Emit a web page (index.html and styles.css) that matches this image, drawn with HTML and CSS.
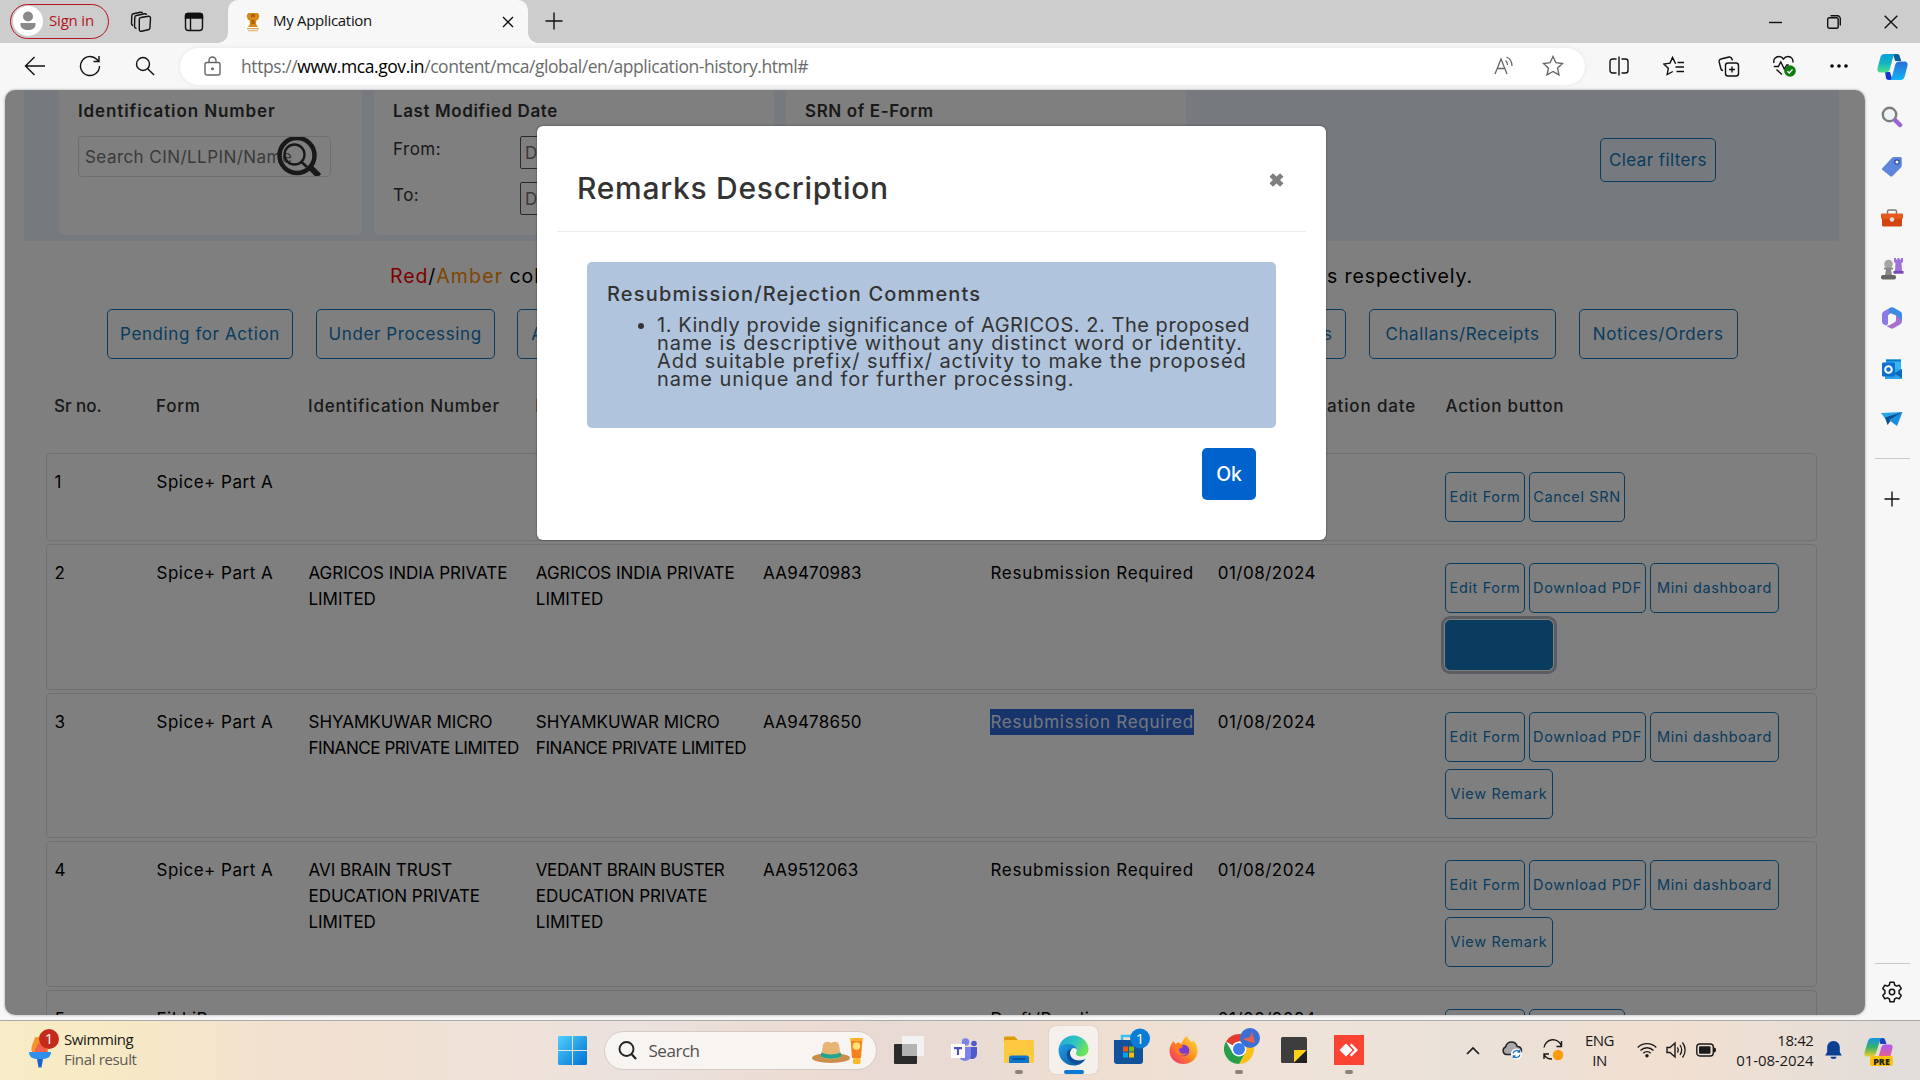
FILE: index.html
```html
<!DOCTYPE html>
<html lang="en">
<head>
<meta charset="utf-8">
<title>My Application</title>
<link rel="stylesheet" href="styles.css">
</head>
<body>
<div class="screen">

<header class="tabbar">
  <div class="signin">
    <svg width="30" height="30" viewBox="0 0 30 30"><circle cx="15" cy="15" r="15" fill="#fff"/><circle cx="15" cy="10.5" r="5" fill="#8a8a8a"/><path d="M7.500 17h15v1.500c0 4-3.500 5.500-7.500 5.500s-7.500-1.500-7.500-5.500z" fill="#8a8a8a"/></svg>
    <span>Sign in</span>
  </div>
  <div class="slot slot-work">
    <svg width="22" height="22" viewBox="0 0 22 22" class="line"><path d="M11 6.500l7.500-1.200a1.800 1.800 0 0 1 2 1.900l-.6 9.800a2 2 0 0 1-1.700 1.800l-6.700 1.500a1.800 1.800 0 0 1-2.200-1.800L9.300 8.300A1.900 1.900 0 0 1 11 6.500zM6.500 17.500l-.8-.3a2 2 0 0 1-1.200-1.900l.3-9a2 2 0 0 1 1.700-1.800l8-1.700c1-.2 1.800.2 2.200 1M3 14.500c-1-.3-1.500-1-1.500-2l.3-8a2 2 0 0 1 1.600-1.800l7-1.500c1-.2 1.800.2 2.200.9"/></svg>
  </div>
  <div class="slot slot-tabs">
    <svg width="20" height="20" viewBox="0 0 20 20" class="line"><rect x="1.500" y="1.500" width="17" height="17" rx="3"/><path d="M1.500 3.500a2 2 0 0 1 2-2h13a2 2 0 0 1 2 2V6h-17z" fill="#111"/><path d="M6.500 6v12"/></svg>
  </div>
  <div class="tab">
    <svg width="16" height="20" viewBox="0 0 16 20"><rect width="16" height="20" fill="#fff"/><path d="M3 1h10l1.500 3-1.500 4h-1.500l-.5 4 2 3H3l2-3-.5-4H3L1.500 4z" fill="#d98a16"/><path d="M6 2h4v3H6zM6.500 8h3v4h-3z" fill="#a8600a"/><path d="M2 16h12v1.200H2zM3 18.200h10v1H3z" fill="#d8a35c"/></svg>
    <span class="tab-title">My Application</span>
    <svg class="tab-close line" width="12" height="12" viewBox="0 0 12 12"><path d="M1 1l10 10M11 1L1 11"/></svg>
  </div>
  <svg class="newtab line" width="18" height="18" viewBox="0 0 18 18"><path d="M9 .5v17M.5 9h17"/></svg>
  <div class="winctl">
    <div><svg width="14" height="14" viewBox="0 0 14 14" class="line"><path d="M0 7.500h13"/></svg></div>
    <div><svg width="14" height="14" viewBox="0 0 14 14" class="line"><rect x=".7" y="2.700" width="10.500" height="10.500" rx="1.800"/><path d="M3.500.8h7a2.800 2.800 0 0 1 2.800 2.800v7"/></svg></div>
    <div><svg width="14" height="14" viewBox="0 0 14 14" class="line"><path d="M.7.700l12.600 12.600M13.300.7L.7 13.300"/></svg></div>
  </div>
</header>

<div class="toolbar">
  <div class="slot"><svg width="22" height="20" viewBox="0 0 22 20" class="line"><path d="M21 10H1.500M10.500 1L1.500 10l9 9"/></svg></div>
  <div class="slot"><svg width="22" height="22" viewBox="0 0 22 22" class="line"><path d="M20.500 11a9.500 9.500 0 1 1-2.800-6.700l2 2M20 1v5.500h-5.500"/></svg></div>
  <div class="slot"><svg width="20" height="20" viewBox="0 0 20 20" class="line"><circle cx="8" cy="8" r="6.500"/><path d="M12.700 12.700l6.300 6.300"/></svg></div>
  <div class="address">
    <svg width="17" height="20" viewBox="0 0 17 20" class="line grey"><rect x="1" y="6.500" width="15" height="12.500" rx="2"/><path d="M5 6.500V4.500a3.500 3.500 0 0 1 7 0v2"/><circle cx="8.500" cy="12.700" r=".8" fill="#555"/></svg>
    <div class="url">https://<b>www.mca.gov.in</b>/content/mca/global/en/application-history.html#</div>
    <svg class="read" width="20" height="20" viewBox="0 0 20 20"><path d="M1 18L7 3l6 15M3.200 12.500h7.600M11.500 4.500c1.500 1 2 2.500 2 4.500M12.500 1c3.500 1.500 5.500 4.500 5.500 9" fill="none" stroke="#666" stroke-width="1.300"/></svg>
    <svg width="22" height="22" viewBox="0 0 22 22" class="line grey"><path d="M11 1.500l2.900 6.200 6.600.8-4.900 4.600 1.300 6.700L11 16.500l-5.900 3.300 1.300-6.700L1.500 8.500l6.600-.8z"/></svg>
  </div>
  <div class="tools">
    <div class="slot"><svg width="20" height="20" viewBox="0 0 20 20" class="line"><path d="M7.500 3H3.500A2.500 2.500 0 0 0 1 5.500v9A2.500 2.500 0 0 0 3.500 17h4M12.500 3h4A2.500 2.500 0 0 1 19 5.500v9a2.500 2.500 0 0 1-2.500 2.500h-4M10 .5v19"/></svg></div>
    <div class="slot"><svg width="21" height="20" viewBox="0 0 21 20" class="line"><path d="M13 7.200l-.7-.1-2.800-5.700L7 7.100l-6.200.9 4.500 4.300L4.200 18.500l5.600-3M14.500 6.500H21M12.500 11h8.500M13.500 15.500H21"/></svg></div>
    <div class="slot"><svg width="22" height="21" viewBox="0 0 22 21" class="line"><rect x="7.500" y="7" width="13" height="13" rx="2.500"/><path d="M14 10.500v6M11 13.500h6M5 14.500c-1.500 0-2-1-2.200-2L1.200 6c-.3-1.500.3-2.700 1.800-3L11 1c1.500-.3 2.500.5 3 2l.4 1.500"/></svg></div>
    <div class="slot"><svg width="24" height="23" viewBox="0 0 24 23" class="line"><path d="M1.800 11.500h4.500l2.500-4.500 3.500 7 2.500-4h2M2 8C1 4.500 3.500 1.500 7 1.500c2 0 3.500 1 4.500 2.500 1-1.500 2.500-2.500 4.500-2.500 3.500 0 5.500 3 4.800 6M4.500 14.500l5.500 5"/><circle cx="18" cy="16" r="5.800" fill="#107c10" stroke="none"/><path d="M15.500 16.200l1.800 1.800 3.200-3.600" stroke="#fff"/></svg></div>
    <div class="slot"><svg width="18" height="6" viewBox="0 0 18 6"><circle cx="2" cy="3" r="1.800"/><circle cx="9" cy="3" r="1.800"/><circle cx="16" cy="3" r="1.800"/></svg></div>
    <div class="slot"><svg width="31" height="28" viewBox="0 0 31 28"><defs><linearGradient id="cp1" x1="0" y1="0" x2="0" y2="1"><stop offset="0" stop-color="#0a9fe0"/><stop offset=".5" stop-color="#16b5c0"/><stop offset="1" stop-color="#4fe08a"/></linearGradient><linearGradient id="cp2" x1="0" y1="0" x2="0" y2="1"><stop offset="0" stop-color="#2a6fd8"/><stop offset="1" stop-color="#12b2f5"/></linearGradient></defs><path d="M16 1h4c2 0 2.500 1 3 3l1.200 4h-6z" fill="#0a5f96"/><path d="M8 19h5l2.500 8H12c-2 0-2.700-1-3-2z" fill="#1438c8"/><path d="M7.500 1H19c-2 0-2.500 1.500-3 3.500l-3 11c-.6 2.500-1.800 4-4.500 4H3.500C.5 19.500 0 17 .7 14.500L3.500 4C4.200 2 5.500 1 7.500 1z" fill="url(#cp1)"/><path d="M23.500 27H12c2 0 2.500-1.500 3-3.500l3-11c.6-2.500 1.800-4 4.500-4h5c3 0 3.500 2.500 2.800 5L27.500 24c-.7 2-2 3-4 3z" fill="url(#cp2)"/></svg></div>
  </div>
</div>

<div class="main">
  <div class="viewport">
    <div class="page">
      <section class="filters">
        <div class="card card-id">
          <h4>Identification Number</h4>
          <div class="searchbox"><span>Search CIN/LLPIN/Name</span>
            <svg width="45" height="39" viewBox="0 0 45 39"><g fill="none" stroke="#333"><circle cx="20" cy="18.500" r="17.500" stroke-width="4.500"/><path d="M33 30l9 9" stroke-width="6"/><circle cx="17.500" cy="17.500" r="10" stroke-width="2.300"/><path d="M24 24.500l6 5.500" stroke-width="2.600"/></g></svg>
          </div>
        </div>
        <div class="card card-date">
          <h4>Last Modified Date</h4>
          <div class="field"><label>From:</label><div class="input">DD/MM/YYYY</div></div>
          <div class="field"><label>To:</label><div class="input">DD/MM/YYYY</div></div>
        </div>
        <div class="card card-srn"><h4>SRN of E-Form</h4></div>
        <div class="clear">Clear filters</div>
      </section>

      <div class="notice"><span><i class="red">Red</i>/<i class="amber">Amber</i> colour coding</span><span>in days respectively.</span></div>

      <nav class="pills">
        <a class="w186">Pending for Action</a><a class="w179">Under Processing</a><a class="w186 start">Approved</a><a class="w186">Rejected</a><a class="w186">Expired</a><a class="w206 end">Draft forms</a><a class="w187">Challans/Receipts</a><a class="w159">Notices/Orders</a>
      </nav>

      <div class="grid thead">
        <span class="tight">Sr no.</span><span>Form</span><span>Identification Number</span><span>Name of company</span><span>SRN</span><span>Status</span><span>Last modification date</span><span>Action button</span>
      </div>

      <div class="grid row short">
        <span>1</span><span>Spice+ Part A</span><span></span><span></span><span></span><span></span><span></span>
        <div class="actions"><a class="b80">Edit Form</a><a class="b96">Cancel SRN</a></div>
      </div>
      <div class="grid row">
        <span>2</span><span>Spice+ Part A</span><span class="caps">AGRICOS INDIA PRIVATE LIMITED</span><span class="caps">AGRICOS INDIA PRIVATE LIMITED</span><span class="code">AA9470983</span><span class="status">Resubmission Required</span><span>01/08/2024</span>
        <div class="actions"><a class="b80">Edit Form</a><a class="b117">Download PDF</a><a class="b129">Mini dashboard</a><a class="b108 active"></a></div>
      </div>
      <div class="grid row">
        <span>3</span><span>Spice+ Part A</span><span class="caps">SHYAMKUWAR MICRO<br><em>FINANCE PRIVATE LIMITED</em></span><span class="caps">SHYAMKUWAR MICRO<br><em>FINANCE PRIVATE LIMITED</em></span><span class="code">AA9478650</span><span class="status"><mark>Resubmission Required</mark></span><span>01/08/2024</span>
        <div class="actions"><a class="b80">Edit Form</a><a class="b117">Download PDF</a><a class="b129">Mini dashboard</a><a class="b108">View Remark</a></div>
      </div>
      <div class="grid row">
        <span>4</span><span>Spice+ Part A</span><span class="caps">AVI BRAIN TRUST EDUCATION PRIVATE LIMITED</span><span class="caps"><em>VEDANT BRAIN BUSTER</em><br>EDUCATION PRIVATE LIMITED</span><span class="code">AA9512063</span><span class="status">Resubmission Required</span><span>01/08/2024</span>
        <div class="actions"><a class="b80">Edit Form</a><a class="b117">Download PDF</a><a class="b129">Mini dashboard</a><a class="b108">View Remark</a></div>
      </div>
      <div class="grid row">
        <span>5</span><span>FiLLiP</span><span></span><span></span><span></span><span class="status">Draft/Pending</span><span>01/08/2024</span>
        <div class="actions"><a class="b80">Edit Form</a><a class="b96">Cancel SRN</a></div>
      </div>
    </div>
    <div class="backdrop"></div>
    <div class="modal">
      <div class="modal-head"><h2>Remarks Description</h2><svg width="15" height="14" viewBox="0 0 15 14"><path d="M2.200 2l10.600 10M12.800 2L2.200 12" stroke="#7f7f7f" stroke-width="5"/></svg></div>
      <div class="remark">
        <h3>Resubmission/Rejection Comments</h3>
        <ul><li><span class="l1">1. Kindly provide significance of AGRICOS. 2. The proposed</span><br>name is descriptive without any distinct word or identity.<br>Add suitable prefix/ suffix/ activity to make the proposed<br>name unique and for further processing.</li></ul>
      </div>
      <div class="ok">Ok</div>
    </div>
  </div>
  <aside class="sidebar">
    <div class="side"><svg width="22" height="22" viewBox="0 0 22 22"><circle cx="8.500" cy="8.500" r="6.700" fill="#eef3f6" stroke="#7d7d7d" stroke-width="2.400"/><path d="M14.500 14.500l4.500 4.500" stroke="#9a63cf" stroke-width="4.500" stroke-linecap="round"/></svg></div>
    <div class="side"><svg width="22" height="22" viewBox="0 0 22 22"><path d="M1.500 12L10.800 2c.6-.7 1.200-1 2-1h6.500c.8 0 1.500.7 1.500 1.500v7c0 .8-.3 1.400-.8 2L11.500 20c-.8.9-1.700.9-2.500 0l-7.500-6c-.8-.7-.6-1.300 0-2z" fill="#5e86de"/><circle cx="16" cy="6" r="2.200" fill="#fff" stroke="#1f4a9e" stroke-width="1.200"/></svg></div>
    <div class="side"><svg width="22" height="18" viewBox="0 0 22 18"><path d="M6.500 5V2.500C6.500 1.500 7 1 8 1h6c1 0 1.500.5 1.500 1.500V5" fill="none" stroke="#7b7b7b" stroke-width="1.500"/><rect x="1" y="8" width="20" height="9.500" rx="1.500" fill="#d34412"/><rect x="0" y="4.500" width="22" height="5.500" rx="1.200" fill="#e8591d"/><circle cx="11" cy="10.500" r="2.200" fill="#ddd"/></svg></div>
    <div class="side"><svg width="23" height="23" viewBox="0 0 23 23"><path d="M13 1h2v1.500h1.500V1h2v1.500H20V1h2v4l-1.500 1 .5 7.500 1.500 3h-10l1.500-3 .5-7.500-1.500-1z" fill="#a070dc"/><path d="M12.500 14h10v2.500h-10z" fill="#7646b4"/><circle cx="7.500" cy="7" r="4.300" fill="#a5a5a5"/><path d="M3 10.500h9v2H10l1 5.500H4l1-5.500H3z" fill="#888"/><rect x="0" y="18" width="15" height="4.500" rx="2" fill="#666"/></svg></div>
    <div class="side"><svg width="22" height="22" viewBox="0 0 22 22"><path d="M9 .8L2.500 4.600A3.200 3.200 0 0 0 1 7.300v7.500a3 3 0 0 0 1.500 2.500L4 18.200c1.500.5 3-.5 3-2V9.500c0-1 .5-1.800 1.300-2.300L13 4.500z" fill="#8b7be6"/><path d="M9.500.6a3 3 0 0 1 3 0l6.800 4A3.200 3.200 0 0 1 21 7.300V13c0 .5 0 1-.3 1.300L15 8.500 8 5.500V3c0-1 .5-1.900 1.500-2.400z" fill="#3d8be2"/><path d="M15 8.500V13c0 1-.5 1.800-1.300 2.300L9 18c-1.500.9-3.500 1-5 .2l5.500 3a3 3 0 0 0 3 0l6.800-4A3.200 3.200 0 0 0 21 14.500c-1-2-3-4.500-6-6z" fill="#a66fd0"/><path d="M11 7l3.600 2v4L11 15.200 7.400 13V9z" fill="#f7f7f7"/></svg></div>
    <div class="side"><svg width="22" height="22" viewBox="0 0 22 22"><path d="M5 1.500h15V19H5z" fill="#35b6f0"/><path d="M5 1.500h15v2H5z" fill="#0f78cc"/><path d="M4 11h17v10H4z" fill="#2aa5ea"/><path d="M21 11v9l-8-4.500z" fill="#0d69b8"/><rect x="1" y="4.500" width="13" height="14" rx="1.300" fill="#0f6fce"/><circle cx="7.500" cy="11.500" r="3.300" fill="none" stroke="#fff" stroke-width="2"/></svg></div>
    <div class="side"><svg width="22" height="16" viewBox="0 0 22 16"><path d="M0 2L21.500 1 6 10z" fill="#23a6e6"/><path d="M21.500 1L4 6.500 6.500 14l3-4z" fill="#0d4f92"/><path d="M21.500 1L8 9l8 6z" fill="#1a8fe0"/></svg></div>
    <div class="rule"></div>
    <svg class="plus line" width="16" height="16" viewBox="0 0 16 16"><path d="M8 .5v15M.5 8h15"/></svg>
    <div class="push"></div>
    <div class="rule"></div>
    <svg class="gear" width="22" height="22" viewBox="0 0 22 22"><path d="M9 1.200h4l.6 2.800 1.900 1.100 2.700-.9 2 3.500-2.100 1.900v2.800l2.100 1.900-2 3.500-2.700-.9-1.900 1.100-.6 2.800H9L8.400 18l-1.900-1.100-2.700.9-2-3.500 2.100-1.900V9.600L1.800 7.700l2-3.500 2.700.9L8.400 4z" fill="none" stroke="#111" stroke-width="1.500" stroke-linejoin="round"/><circle cx="11" cy="11" r="2.700" fill="none" stroke="#111" stroke-width="1.500"/></svg>
  </aside>
</div>

<footer class="taskbar">
  <div class="widget">
    <svg width="36" height="44" viewBox="0 0 36 44"><path d="M5 26C3 20 7 17 8 11c4 1 5-1 5-4 5 3 9 9 8 19z" fill="#f5922a"/><path d="M8 26c-1-4 3-5 3-9 4 2 9 3 9 9z" fill="#f2604f"/><path d="M2 26h22c0 5-4 7-8 7h-6c-4 0-8-2-8-7z" fill="#2e8fee"/><path d="M10 33h6l-1.500 8.500h-3z" fill="#1e5fd0"/><circle cx="22" cy="13" r="10" fill="#c42b1c"/><text x="22" y="18" text-anchor="middle" class="badge-num">1</text></svg>
    <div class="wtext"><span>Swimming</span><span class="sub">Final result</span></div>
  </div>
  <svg class="start-logo" width="29" height="29" viewBox="0 0 29 29"><defs><linearGradient id="w" x1="0" y1="0" x2="1" y2="1"><stop offset="0" stop-color="#4fd0ff"/><stop offset="1" stop-color="#0070d0"/></linearGradient></defs><path d="M1 0h13v14H0V1zM15 0h13l1 1v13H15zM0 15h14v14H1l-1-1zM15 15h14v13l-1 1H15z" fill="url(#w)"/></svg>
  <div class="tsearch">
    <svg width="19" height="19" viewBox="0 0 19 19"><circle cx="8.500" cy="8" r="7" fill="none" stroke="#222" stroke-width="1.900"/><path d="M13.500 13l4.500 5" stroke="#222" stroke-width="2.200"/></svg>
    <span>Search</span>
    <svg class="hat" width="52" height="28" viewBox="0 0 52 28"><ellipse cx="19" cy="21" rx="19" ry="5" fill="#c98f4c"/><path d="M9 20l2-12c1-4 5-4 8-2 3-2 7-2 8 2l2 12c-6 3-14 3-20 0z" fill="#e6b574"/><path d="M9.300 15.500c6 2.500 13.400 2.500 19.400 0l.6 4c-6 3-14.600 3-20.600 0z" fill="#23a58f"/><path d="M38.500 1h12l-1.500 20h-9z" fill="#f58220"/><path d="M38.500 1h12l-.2 3H38.700z" fill="#ffb02e"/><circle cx="44.500" cy="9" r="3.800" fill="#ffe27a"/><rect x="41" y="21" width="7.500" height="6" rx="1.500" fill="#fbb829"/></svg>
  </div>
  <div class="apps">
    <div class="app"><svg width="30" height="30" viewBox="0 0 30 30"><rect x="0" y="9" width="23" height="20" rx="1" fill="#2b2b2b"/><rect x="8" y="1" width="22" height="20" rx="1" fill="#f2f2f2"/><path d="M8 9h15v12H8z" fill="#b3b3b3"/></svg></div>
    <div class="app"><svg width="28" height="26" viewBox="0 0 28 26"><circle cx="15.500" cy="5" r="3.800" fill="#7b83eb"/><circle cx="24" cy="6.500" r="2.800" fill="#5059c9"/><path d="M19 10h8v7a5 5 0 0 1-8 4z" fill="#5059c9"/><path d="M9 10h12v8a6 6 0 0 1-12 0z" fill="#7b83eb"/><rect x="1" y="7" width="14" height="14" fill="#fff"/><path d="M4 10h8v2.200H9.100V18H6.900v-5.800H4z" fill="#4b53bc"/></svg></div>
    <div class="app run"><svg width="30" height="28" viewBox="0 0 30 28"><path d="M0 2c0-1 .5-1.500 1.500-1.500h9L14 4v6H0z" fill="#dc9c06"/><rect x="0" y="4" width="30" height="23" rx="1.500" fill="#fdc93f"/><path d="M5 27v-5c0-1.500 1-2.500 2.500-2.500h15c1.500 0 2.500 1 2.500 2.500v5z" fill="#0c76cf"/><path d="M8.500 23h13" stroke="#0a4b8c" stroke-width="1.500"/></svg></div>
    <div class="app on"><svg width="31" height="31" viewBox="0 0 31 31"><defs><linearGradient id="e1" x1="0" y1="0" x2="1" y2=".4"><stop offset="0" stop-color="#20a8d8"/><stop offset=".6" stop-color="#30c5c0"/><stop offset="1" stop-color="#6be35a"/></linearGradient><linearGradient id="e2" x1="0" y1="0" x2="1" y2="1"><stop offset="0" stop-color="#1fa0e6"/><stop offset="1" stop-color="#0c4e98"/></linearGradient></defs><path d="M.6 14C1.500 6 8 .5 15.500.5 24 .5 30.500 7 30.500 14c0 5-3.500 7.500-8 7.500-4 0-5.500-1.500-4.500-3.500C21 13 15 6 .6 14z" fill="url(#e1)"/><path d="M.5 14.500C2 10.500 6 9 9.500 9c6 0 9 3 9.500 6-2-3-7-2-7 3.500 0 6 8 9.500 15.500 5.500C24.500 28.500 20.500 30.500 16 30.500c-8.500 0-15.500-6-15.500-16z" fill="url(#e2)"/><path d="M12 18c0-4 4-6 7-3-2 2-1.500 5 2 6.500 3 .8 5 0 7-1.500.5 1.500 0 3-.8 4C20 28 12 24 12 18z" fill="#f4efeb"/><path d="M9 17c-1 6 3 11 9 12 4-.5 7-2 9.500-5C20 27.500 12 24.500 12 18c0-2 1-3.500 2-4-2 0-4 1-5 3z" fill="#0d4f9a"/></svg></div>
    <div class="app"><svg width="37" height="37" viewBox="0 0 37 37"><path d="M9 14V8h12v6" fill="none" stroke="#35c1f1" stroke-width="2.500"/><path d="M1 12h29v21a3 3 0 0 1-3 3H4a3 3 0 0 1-3-3z" fill="#12529a"/><path d="M10 18.500h5v5h-5z" fill="#f25022"/><path d="M16 18.500h5v5h-5z" fill="#7fba00"/><path d="M10 24.500h5v5h-5z" fill="#00a4ef"/><path d="M16 24.500h5v5h-5z" fill="#ffb900"/><circle cx="27" cy="10.500" r="10" fill="#0a7cd6"/><text x="27" y="15.500" text-anchor="middle" class="badge-num">1</text></svg></div>
    <div class="app"><svg width="29" height="30" viewBox="0 0 29 30"><defs><linearGradient id="f" x1="1" y1="0" x2="0" y2="1"><stop offset="0" stop-color="#ffe43d"/><stop offset=".5" stop-color="#ff8a1e"/><stop offset="1" stop-color="#f0207a"/></linearGradient></defs><path d="M18 1c1 3 3 4 4 6l3-1c3 4 3.500 7 3.500 10 0 7-6 13-14 13S.5 23 .5 16c0-4 1.500-7 4-10l2 3 3-2 3 2c1-3 2-6 5.500-8z" fill="url(#f)"/><circle cx="14.500" cy="15.500" r="5.800" fill="#7a3bd0"/><path d="M5 10c4-2 8-1 9 2l-4 2c0 4 4 6 8 4-3 5-12 3-13-8z" fill="#ff7a20"/></svg></div>
    <div class="app run"><svg width="36" height="37" viewBox="0 0 36 37"><g transform="translate(0 6)"><circle cx="15" cy="15" r="15" fill="#fff"/><path d="M15 15L2 7.500A15 15 0 0 1 28 7.500H15z" fill="#e33b2e"/><path d="M28 7.500A15 15 0 0 1 15 30l6.500-11.500L15 7.500z" fill="#fbc116"/><path d="M2 7.500A15 15 0 0 0 15 30l6.500-11.500H8.500z" fill="#2a9d4b"/><circle cx="15" cy="15" r="7.500" fill="#fff"/><circle cx="15" cy="15" r="6" fill="#3b7ded"/></g><circle cx="26" cy="10" r="10" fill="#3b6fd4"/><path d="M19 11l7-2 2-5 3 11-5-1z" fill="#e8614f"/></svg></div>
    <div class="app"><svg width="26" height="26" viewBox="0 0 26 26"><rect width="26" height="26" rx="1.500" fill="#3d3d3d"/><path d="M13 13h13L13 25.500z" fill="#fcd116"/><path d="M26 13v13H13z" fill="#222"/></svg></div>
    <div class="app run"><svg width="30" height="30" viewBox="0 0 30 30"><rect width="30" height="30" fill="#fb4334"/><path d="M12 8.500l6.500 6.500-6.500 6.500L5.500 15zM17.500 8.500L24 15l-6.500 6.500-1.700-1.700 4.800-4.800-4.800-4.800z" fill="#fff"/></svg></div>
  </div>
  <div class="tray">
    <svg class="t1" width="14" height="9" viewBox="0 0 14 9"><path d="M1 8l6-6 6 6" fill="none" stroke="#1a1a1a" stroke-width="1.700"/></svg>
    <svg class="t2" width="22" height="20" viewBox="0 0 22 20"><path d="M5 14.500a4 4 0 0 1-.5-7.500C5.500 3.500 8 2 10.500 2c3 0 5 2 5.700 4.500C19 6.500 20.500 8.500 20.500 11S19 14.500 17 14.500z" fill="#a8a8a8" stroke="#222" stroke-width="1.500"/><circle cx="15.500" cy="14" r="5.500" fill="#fff"/><path d="M12 13.500a3.600 3.600 0 0 1 6.500-1.500M19 14.500a3.600 3.600 0 0 1-6.500 1.500M18.700 10v2.200h-2.200M12.300 18v-2.200h2.200" fill="none" stroke="#1470c4" stroke-width="1.300"/></svg>
    <svg class="t3" width="22" height="22" viewBox="0 0 22 22"><path d="M2 8.500A9 9 0 0 1 19.500 7M19.500 2v5.500h-5M2 20v-5h5M2 15c1 3 4 5 8 5" fill="none" stroke="#1a1a1a" stroke-width="1.400"/><circle cx="16" cy="16" r="5.200" fill="#ff9a0b"/></svg>
    <div class="lang"><span>ENG</span><span>IN</span></div>
    <svg class="t4" width="20" height="16" viewBox="0 0 20 16"><path d="M.7 5.500a13 13 0 0 1 18.600 0M3.500 8.500a9 9 0 0 1 13 0M6.300 11.200a5.200 5.200 0 0 1 7.400 0" fill="none" stroke="#1a1a1a" stroke-width="1.400"/><circle cx="10" cy="13.700" r="1.700" fill="#1a1a1a"/></svg>
    <svg class="t5" width="21" height="18" viewBox="0 0 21 18"><path d="M1 6.500h3L9 2v14l-5-4.500H1z" fill="none" stroke="#1a1a1a" stroke-width="1.400"/><path d="M11.500 6.300c1 1.700 1 3.700 0 5.400M14 4c2 3 2 7 0 10M16.500 1.500c3.500 4.500 3.500 10.500 0 15" fill="none" stroke="#1a1a1a" stroke-width="1.300"/></svg>
    <svg class="t6" width="21" height="14" viewBox="0 0 21 14"><rect x=".8" y="1" width="16.500" height="12" rx="3" fill="none" stroke="#1a1a1a" stroke-width="1.400"/><rect x="3" y="3.200" width="11.500" height="7.600" rx="1" fill="#1a1a1a"/><path d="M18 4.500c1.500 0 2 1 2 2.500s-.5 2.500-2 2.500z" fill="#1a1a1a"/></svg>
    <div class="clock"><span>18:42</span><span>01-08-2024</span></div>
    <svg class="t7" width="17" height="20" viewBox="0 0 17 20"><path d="M8.500 1c4 0 6.300 3 6.300 6.500v4.500l2 3.500H.2l2-3.500V7.500C2.200 4 4.500 1 8.500 1zM5.500 16.800h6c0 3-6 3-6 0z" fill="#0a3f93"/></svg>
    <svg class="t8" width="30" height="30" viewBox="0 0 30 30"><defs><linearGradient id="p1" x1="0" y1="0" x2="0" y2="1"><stop offset="0" stop-color="#1792e8"/><stop offset=".5" stop-color="#35b26a"/><stop offset="1" stop-color="#f0cf2a"/></linearGradient><linearGradient id="p2" x1="0" y1="0" x2="0" y2="1"><stop offset="0" stop-color="#a85cf0"/><stop offset="1" stop-color="#f4607a"/></linearGradient></defs><path d="M14 1h5c2 0 2.500 3 3.500 6h-6z" fill="#1e3fc0"/><path d="M8 1h11c-2 0-3 2-3.500 4L12 16c-.5 2-2 3.500-4 3.500H3c-2.500 0-3-2-2.500-4L4 4c.7-2 2-3 4-3z" fill="url(#p1)"/><path d="M26 7.500h-5c-2.500 0-3.500 2-4 4L14 22h9c2 0 3-1 3.500-3l2-8c.5-2-.5-3.500-2.500-3.500z" fill="url(#p2)"/><rect x="6" y="19" width="23" height="10" rx="2" fill="#fdc30b"/><text x="17.500" y="27.500" text-anchor="middle" class="pre">PRE</text></svg>
  </div>
</footer>
</div>
</body>
</html>
```
FILE: styles.css
```css
* { box-sizing: border-box; }
body { margin: 0; overflow: hidden; font-family: "Open Sans", "Noto Sans", sans-serif; }
svg { display: block; flex: none; }
i, em, b { font-style: normal; font-weight: 400; }
.line { fill: none; stroke: #111; stroke-width: 1.4; }
.line.grey { stroke: #666; }

.screen { width: 1920px; height: 1080px; display: grid; grid-template-rows: 43px 47px 931px 59px; background: #f7f7f7; }

/* tab strip */
.tabbar { display: flex; align-items: center; background: #cdcdcd; }
.signin { width: 99px; height: 35px; margin: 0 0 1px 10px; border: 1.5px solid #b3141c; border-radius: 18px; display: flex; align-items: center; gap: 6px; padding-left: 2px; color: #b3141c; font-size: 15px; letter-spacing: -.18px; white-space: nowrap; }
.signin span { padding-bottom: 2px; }
.slot { display: flex; align-items: center; justify-content: center; width: 55px; }
.slot-work { margin-left: 4px; }
.slot-tabs { width: 51px; }
.tab { position: relative; align-self: stretch; width: 300px; margin-left: 9px; padding-left: 17px; background: #f7f7f7; border-radius: 10px 10px 0 0; display: flex; align-items: center; }
.tab::before, .tab::after { content: ""; position: absolute; bottom: 0; width: 10px; height: 10px; }
.tab::before { left: -10px; background: radial-gradient(circle at 0 0, #cdcdcd 9.500px, #f7f7f7 10px); }
.tab::after { right: -10px; background: radial-gradient(circle at 100% 0, #cdcdcd 9.500px, #f7f7f7 10px); }
.tab-title { margin-left: 12px; font-size: 15px; letter-spacing: -.3px; line-height: 40px; color: #111; padding-bottom: 4px; }
.tab-close { margin-left: auto; margin-right: 14px; }
.newtab { margin-left: 17px; margin-bottom: 2px; }
.winctl { margin-left: auto; display: flex; }
.winctl div { width: 57.5px; display: flex; justify-content: center; }

/* toolbar */
.toolbar { display: flex; align-items: center; padding-left: 7px; }
.toolbar .slot { padding-bottom: 1px; }
.address { width: 1405px; height: 37px; margin: 0 0 1px 8px; padding: 0 21px 0 24px; border-radius: 19px; background: #fff; box-shadow: 0 0 4px rgba(0,0,0,.08); display: flex; align-items: center; }
.url { margin-left: 20px; font-size: 17.5px; letter-spacing: -.42px; color: #6b6b6b; white-space: nowrap; }
.url b { color: #000; }
.read { margin-left: auto; margin-right: 28px; }
.tools { display: flex; margin-left: 6px; }
.tools .slot:last-child { width: 53px; padding-bottom: 0; }

/* browser body */
.main { display: flex; padding-left: 5px; border-bottom: 1px solid #aaa; }
.viewport { position: relative; width: 1860px; height: 925px; border-radius: 10px; overflow: hidden; background: #fff; box-shadow: 0 0 3px rgba(0,0,0,.35); font-family: Inter, "Liberation Sans", sans-serif; font-size: 17px; letter-spacing: .5px; color: #000; line-height: 26px; }
.backdrop { position: absolute; inset: 0; background: rgba(0,0,0,.5); }
h2, h3, h4, ul { margin: 0; font-weight: 500; }

/* filters */
.filters { display: flex; gap: 12px; height: 151px; margin: 0 26px 0 19px; padding-left: 35px; background: #ecf4ff; }
.card { height: 145px; padding: 8px 19px 0; background: #fff; border-radius: 0 0 5px 5px; }
.card-id { width: 303px; }
.card-date { width: 400px; }
.card-srn { width: 400px; }
.card h4 { font-weight: 600; color: #333; letter-spacing: .6px; }
.card-id h4 { letter-spacing: .9px; }
.searchbox { width: 253px; height: 41px; margin-top: 12px; padding: 0 8px 0 6px; border: 1px solid #dcdcdc; border-radius: 4px; display: flex; align-items: center; justify-content: space-between; color: #757575; letter-spacing: .45px; white-space: nowrap; }
.searchbox span { flex: 0 0 190px; width: 190px; }
.searchbox svg { position: relative; }
.field { display: flex; margin-top: 12px; line-height: 27px; }
.field + .field { margin-top: 13px; }
.field label { width: 127px; color: #333; }
.field .input { width: 200px; height: 33px; line-height: 33px; padding-left: 4px; border: 1px solid #555; border-radius: 2px; color: #757575; }
.clear { width: 116px; height: 44px; margin: 48px 0 0 402px; border: 1px solid #1278bd; border-radius: 5px; color: #1278bd; text-align: center; line-height: 43px; letter-spacing: .4px; white-space: nowrap; }

.notice { display: flex; justify-content: space-between; margin: 22px 392px 0 385px; font-size: 19.5px; letter-spacing: .9px; white-space: nowrap; }
.red { letter-spacing: .9px; color: #ff0000; }
.amber { color: #ff8c00; letter-spacing: 1.15px; }

/* category links */
.pills { display: flex; gap: 22.600px; margin: 20px 0 0 102px; }
.pills a { flex: none; height: 50px; line-height: 48px; text-align: center; border: 1px solid #1278bd; border-radius: 5px; color: #1278bd; letter-spacing: .6px; white-space: nowrap; }
.pills .start { text-align: left; padding-left: 13px; }
.pills .end { text-align: right; padding-right: 13px; }
.w186 { width: 186px; }
.w179 { width: 179px; }
.w206 { width: 203.500px; }
.w187 { width: 187px; }
.w159 { width: 159px; }

/* table */
.grid { display: grid; grid-template-columns: 102px 152px repeat(5, 227.300px) 1fr; margin: 0 48.500px 0 41px; padding-left: 7.500px; border: 1px solid transparent; }
.grid > span { white-space: pre-wrap; padding-right: 8px; }
.thead { margin-top: 32.500px; height: 61.500px; padding-left: 7px; color: #333; font-weight: 500; letter-spacing: .75px; }
.thead .tight { letter-spacing: 0; }
.thead > span { padding-right: 14px; }
.thead > span:nth-child(7) { white-space: nowrap; letter-spacing: .85px; }
.thead > span:nth-child(8) { padding-left: 1px; }
.row { height: 145.500px; margin-bottom: 3.100px; padding-top: 15px; border-color: #e0e0e0; border-radius: 4px; }
.row.short { height: 88px; }
.row .caps { letter-spacing: -.03px; }
.row .caps em { letter-spacing: -.43px; }
.row .code { letter-spacing: .2px; }
.row .status { letter-spacing: .75px; white-space: nowrap; }
mark { display: inline-block; background: #2c66d8; color: #e8eefc; }
.actions { display: flex; flex-wrap: wrap; align-content: flex-start; gap: 7px 4px; padding-top: 3px; font-size: 14.500px; letter-spacing: .65px; }
.actions a { height: 50px; line-height: 47px; border: 1px solid #1278bd; border-radius: 5px; color: #1278bd; text-align: center; white-space: nowrap; }
.b80 { width: 80px; }
.b96 { width: 96px; }
.b117 { width: 117px; }
.b129 { width: 129px; }
.b108 { width: 108px; }
.actions .active { background: #1278bd; box-shadow: 0 0 0 1px #fff, 0 0 0 4px #b5bcc4; }

/* dialog */
.modal { position: absolute; left: 532px; top: 36px; width: 789px; height: 414px; padding: 0 20px; background: #fff; border-radius: 6px; box-shadow: 0 0 2px rgba(0,0,0,.6); color: #333; }
.modal-head { display: flex; justify-content: space-between; height: 106px; padding: 38px 22px 0 20px; border-bottom: 1px solid #e9ecef; }
.modal-head h2 { font-size: 30px; line-height: 49px; letter-spacing: .72px; }
.modal-head svg { margin-top: 9px; }
.remark { height: 166px; margin: 30px 30px 0; padding: 19px 20px 0; border-radius: 5px; background: #b0c4de; }
.remark h3 { font-size: 20px; line-height: 26px; letter-spacing: 1.17px; white-space: nowrap; }
.remark ul { padding-left: 50px; margin-top: 9px; font-size: 20px; font-weight: 400; line-height: 18.100px; letter-spacing: .93px; white-space: nowrap; }
.remark .l1 { letter-spacing: .54px; }
.ok { width: 54px; height: 52px; margin: 20px 50px 0 auto; border-radius: 5px; background: #0062cc; color: #fff; text-align: center; font-size: 19.500px; font-weight: 500; line-height: 52px; letter-spacing: -.3px; }

/* edge sidebar */
.sidebar { width: 55px; display: flex; flex-direction: column; align-items: center; padding: 2px 1px 0 0; }
.side { height: 50.300px; display: flex; align-items: center; }
.rule { width: 35px; height: 1px; background: #c8c8c8; }
.side + .rule { margin-top: 14px; }
.plus { margin-top: 32px; }
.push { flex: 1; }
.gear { margin: 17px 0 17px; }

/* taskbar */
.taskbar { display: flex; background: linear-gradient(90deg, #f8ecc8 0, #f7eac4 5%, #f2e0d0 15%, #efe2d8 26%, #ebe1de 33%, #ecdcd2 42%, #e8d9d4 46%, #eadcd3 52%, #eeddd0 56%, #efe3d9 68%, #eae1d9 76%, #f1dfd0 86%, #ecdfd4 92%, #e0dddb 100%); color: #1a1a1a; font-size: 15px; }
.widget { display: flex; width: 557.500px; padding: 5px 0 0 27px; }
.wtext { display: flex; flex-direction: column; margin: 3px 0 0 1px; line-height: 20px; letter-spacing: -.4px; }
.wtext .sub { color: #5e5a55; letter-spacing: -.35px; }
.badge-num { fill: #fff; font: 15px "Open Sans", sans-serif; }
.start-logo { margin: 15px 17px 0 0; }
.tsearch { width: 273px; height: 39px; margin-top: 10px; padding: 0 12px 0 13px; border: 1px solid #d6cac4; border-radius: 20px; background: #f8f4f2; display: flex; align-items: center; font-size: 17px; letter-spacing: -.47px; color: #505050; }
.tsearch span { margin-left: 12px; padding-bottom: 1px; }
.hat { margin-left: auto; }
.apps { display: flex; margin-left: 4.500px; padding-top: 5px; }
.app { position: relative; width: 55px; height: 48px; display: flex; align-items: center; justify-content: center; }
.app:nth-child(5) svg, .app:nth-child(7) svg { margin: -7px 0 0 6px; }
.app.run::after, .app.on::after { content: ""; position: absolute; bottom: 0; width: 8px; height: 4px; border-radius: 2px; background: #8b827b; }
.app.on { width: 49px; margin: 0 3px; border-radius: 6px; background: #f5f0ec; box-shadow: 0 0 1px rgba(0,0,0,.3); }
.app.on::after { width: 20px; background: #0a78d4; }
.tray { display: flex; align-items: center; margin-left: 89.500px; padding-bottom: 1px; flex: 1; }
.tray .t2 { margin-left: 21px; }
.tray .t3 { margin-left: 19px; }
.lang, .clock { display: flex; flex-direction: column; line-height: 20px; padding-bottom: 1px; }
.lang { width: 40px; margin-left: 16px; align-items: center; letter-spacing: -.5px; }
.clock { width: 80px; margin-left: 17px; align-items: flex-end; letter-spacing: -.1px; }
.clock span:first-child { letter-spacing: -.4px; }
.tray .t4 { margin-left: 17px; }
.tray .t5 { margin-left: 9px; }
.tray .t6 { margin-left: 9px; }
.tray .t7 { margin-left: 11px; }
.tray .t8 { margin: 4px 0 0 22px; }
.pre { font: 800 9px "Open Sans", sans-serif; fill: #222; }
```
